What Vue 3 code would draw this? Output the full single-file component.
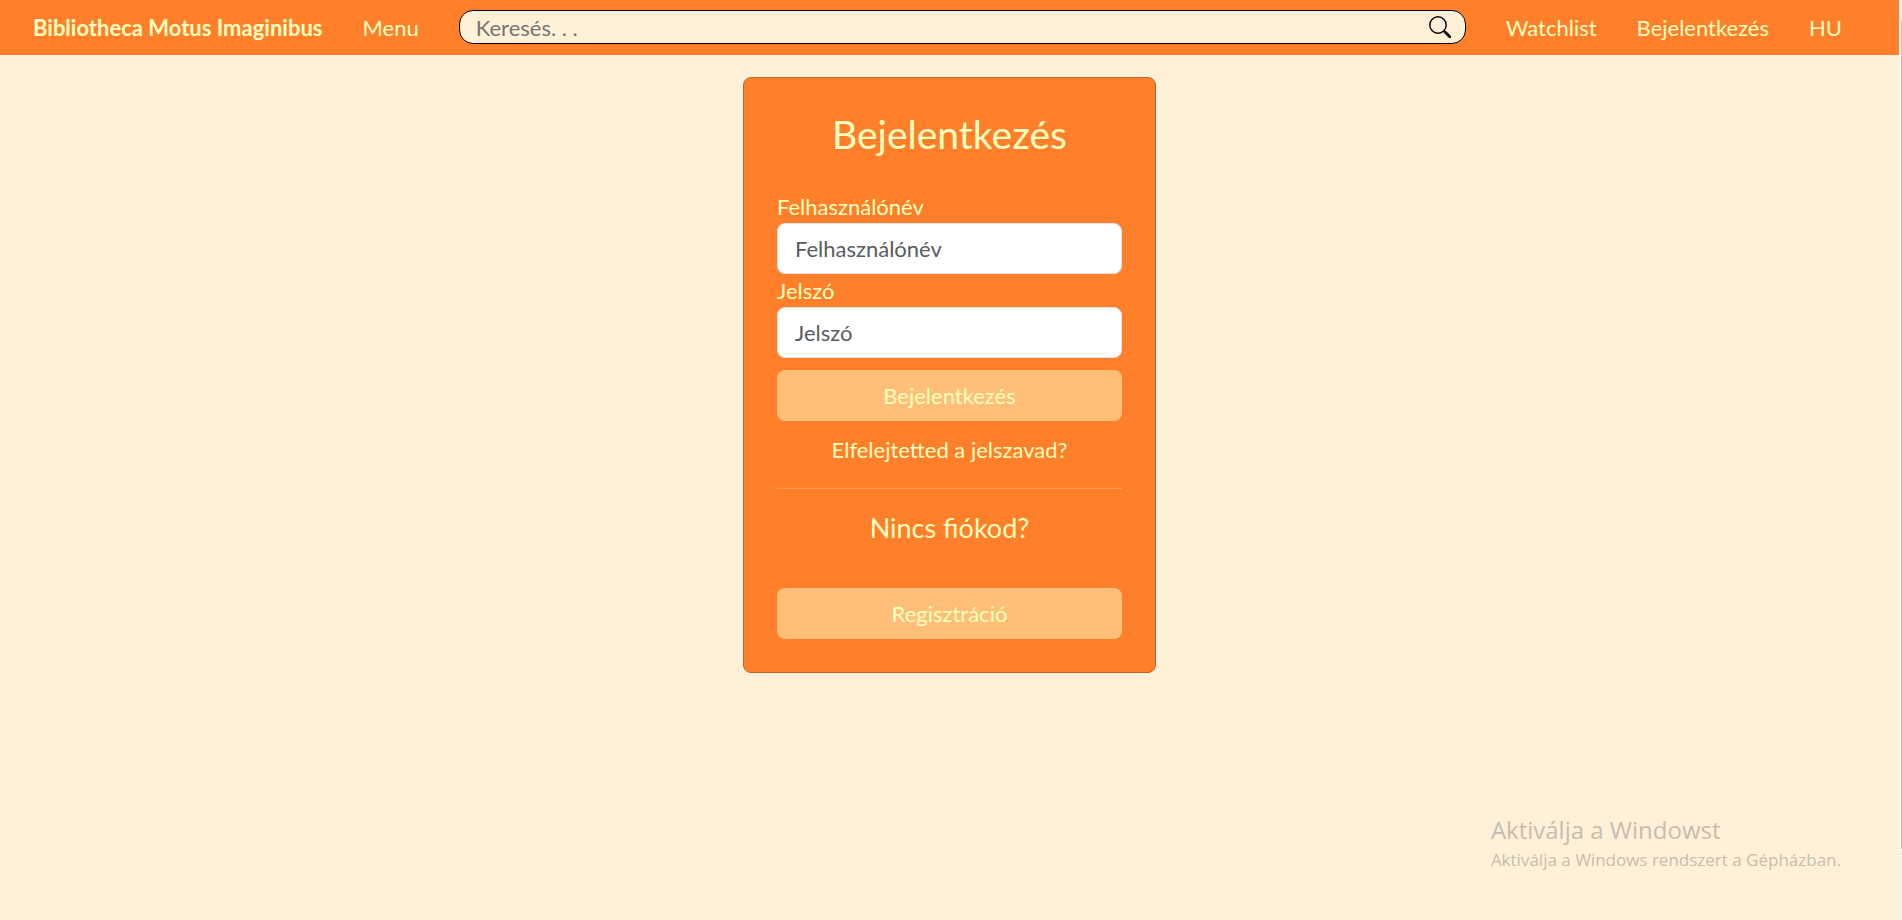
<script setup>
import { ref } from 'vue'

const query = ref('')
const username = ref('')
const password = ref('')
</script>

<template>
  <div class="window">
    <div class="page">
      <nav class="navbar">
        <a class="brand" href="#">Bibliotheca Motus Imaginibus</a>
        <a class="nav-link" href="#">Menu</a>
        <form class="search" @submit.prevent>
          <input v-model="query" class="search-input" type="text" placeholder="Keresés. . ." aria-label="Keresés" />
          <button class="search-button" type="submit" aria-label="Keresés">
            <svg viewBox="0 0 22 22" fill="none" stroke="#000">
              <circle cx="9" cy="9" r="8.2" stroke-width="1.4" />
              <path d="M14.8 14.8 L16.2 16.2" stroke-width="1.8" />
              <path d="M16 16 L20.8 20.8" stroke-width="2.8" stroke-linecap="round" />
            </svg>
          </button>
        </form>
        <a class="nav-link" href="#">Watchlist</a>
        <a class="nav-link" href="#">Bejelentkezés</a>
        <a class="nav-link" href="#">HU</a>
      </nav>

      <main class="content">
        <section class="card">
          <h1>Bejelentkezés</h1>
          <form class="login" @submit.prevent>
            <label for="username">Felhasználónév</label>
            <input id="username" v-model="username" class="field" type="text" placeholder="Felhasználónév" />
            <label for="password">Jelszó</label>
            <input id="password" v-model="password" class="field" type="password" placeholder="Jelszó" />
            <button class="btn" type="submit">Bejelentkezés</button>
          </form>
          <a class="forgot" href="#">Elfelejtetted a jelszavad?</a>
          <hr />
          <h2>Nincs fiókod?</h2>
          <button class="btn" type="button">Regisztráció</button>
        </section>
      </main>

      <aside class="notice">
        <p class="notice-title">Aktiválja a Windowst</p>
        <p class="notice-text">Aktiválja a Windows rendszert a Gépházban.</p>
      </aside>
    </div>
    <div class="track"><div class="thumb"></div></div>
  </div>
</template>

<style>
body {
  margin: 0;
  background: #fff1d7;
}
</style>

<style scoped>
.window {
  display: flex;
  min-height: 100vh;
  font-family: Lato, "Liberation Sans", sans-serif;
  font-size: 22px;
  line-height: 33px;
  color: #ffffbf;
}
.window * {
  box-sizing: border-box;
}
.page {
  flex: 1;
  position: relative;
}
a {
  color: inherit;
  text-decoration: none;
}
input,
button {
  font: inherit;
  margin: 0;
}
.navbar {
  display: flex;
  align-items: center;
  gap: 40px;
  padding: 10px 57px 11px 33px;
  background: #ff7f2a;
}
.brand {
  font-weight: 700;
}
.search {
  flex: 1;
  display: flex;
  align-items: center;
  height: 34px;
  padding: 0 14px 0 16px;
  border: 1px solid #000;
  border-radius: 14px;
  background: #fff1d7;
}
.search-input {
  flex: 1;
  min-width: 0;
  height: 32px;
  padding: 0;
  border: 0;
  outline: 0;
  background: transparent;
  color: #212529;
}
.search-input::placeholder {
  color: #757575;
  opacity: 1;
}
.search-button {
  display: flex;
  padding: 0;
  border: 0;
  background: none;
}
.search-button svg {
  width: 22px;
  height: 22px;
}
.content {
  display: flex;
  justify-content: center;
  padding-top: 22px;
}
.card {
  width: 413px;
  padding: 33px;
  border: 1px solid #c26428;
  border-radius: 8px;
  background: #ff7f2a;
  text-align: center;
}
h1 {
  margin: 0 0 33px;
  font-size: 39px;
  font-weight: 400;
  line-height: 46px;
}
.login {
  display: flex;
  flex-direction: column;
}
label {
  text-align: left;
}
.field {
  width: 100%;
  height: 51px;
  padding: 0 17px;
  border: 1px solid #dee2e6;
  border-radius: 8px;
  background: #fff;
  color: #212529;
}
.field::placeholder {
  color: #595c5f;
  opacity: 1;
}
.btn {
  width: 100%;
  height: 51px;
  padding: 0;
  border: 0;
  border-radius: 8px;
  background: #ffbf78;
  color: #ffffbf;
}
.login .btn {
  margin-top: 12px;
}
.forgot {
  display: block;
  margin-top: 12px;
}
hr {
  margin: 22px 0;
  border: 0;
  border-top: 1px solid #ff9f4f;
}
h2 {
  margin: 0 0 44px;
  font-size: 27px;
  font-weight: 400;
  line-height: 33px;
}
.notice {
  position: absolute;
  right: 58px;
  bottom: 46px;
  color: #c6bdaf;
  font-family: "Open Sans", "Noto Sans", sans-serif;
}
.notice p {
  margin: 0;
}
.notice-title {
  font-size: 24px;
  line-height: 32px;
}
.notice-text {
  font-size: 17px;
  line-height: 28px;
}
.track {
  width: 3px;
  padding-top: 21px;
  background: #f6f1ec;
}
.thumb {
  width: 1px;
  height: 90vh;
  margin-left: auto;
  background: #c1bfc0;
}
</style>
